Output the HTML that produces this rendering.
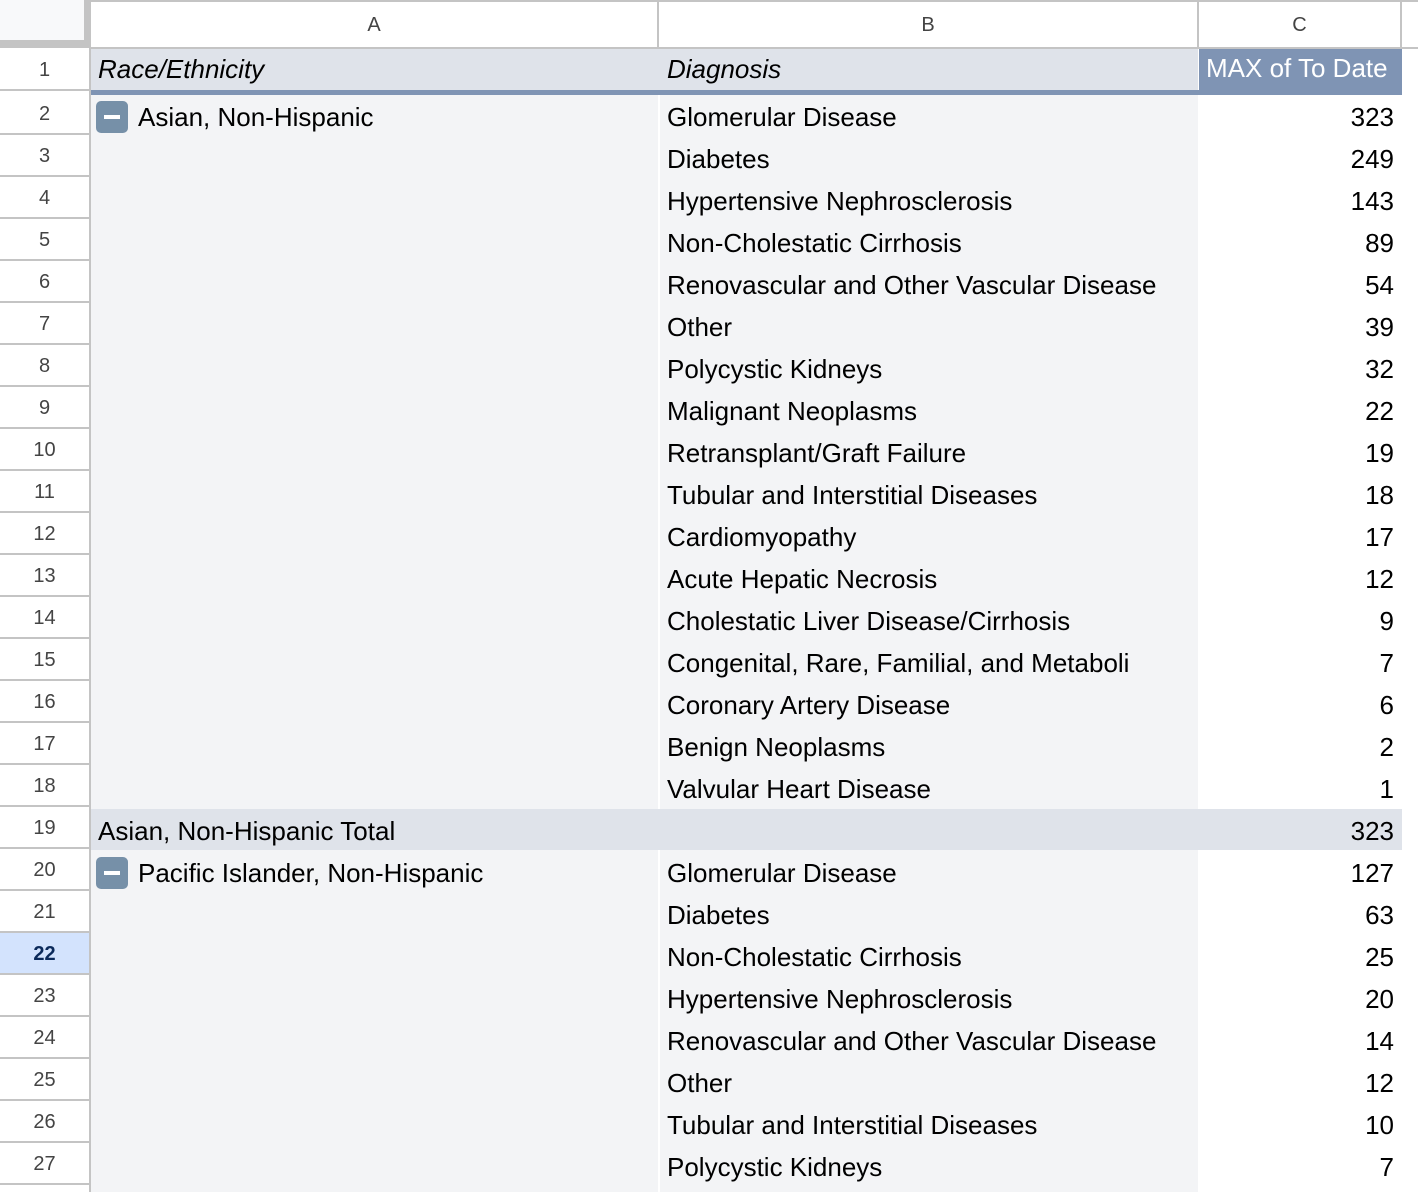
<!DOCTYPE html>
<html><head><meta charset="utf-8"><style>
*{margin:0;padding:0;box-sizing:border-box}
html,body{width:1418px;height:1192px;overflow:hidden}
body{background:#fff;font-family:"Liberation Sans",Arial,sans-serif;position:relative}
.a{position:absolute}
.rh{position:absolute;left:0;width:89px;height:42px;border-bottom:2px solid #c4c4c4;text-align:center;font-size:20px;color:#444;line-height:42px;background:#fff}
.t{position:absolute;font-size:26px;color:#000;line-height:46px;white-space:nowrap}
.n{position:absolute;right:24px;font-size:26px;line-height:46px;color:#000}
.mi{position:absolute;left:96px;width:32px;height:32px;background:#7690a8;border-radius:5px}
.mi:after{content:"";position:absolute;left:8px;top:14px;width:16px;height:4px;background:#fff}
</style></head><body>
<div class="a" style="left:0;top:0;width:84px;height:40px;background:#f8f9fa"></div>
<div class="a" style="left:0;top:40px;width:89px;height:8px;background:#c4c4c4"></div>
<div class="a" style="left:84px;top:0;width:7px;height:48px;background:#c4c4c4"></div>
<div class="a" style="left:91px;top:0;width:1327px;height:2px;background:#c4c4c4"></div>
<div class="a" style="left:91px;top:47px;width:1327px;height:2px;background:#c4c4c4"></div>
<div class="a" style="left:657px;top:0;width:2px;height:48px;background:#c4c4c4"></div>
<div class="a" style="left:1197px;top:0;width:2px;height:48px;background:#c4c4c4"></div>
<div class="a" style="left:1400px;top:0;width:2px;height:48px;background:#c4c4c4"></div>
<div class="a" style="left:91px;top:3px;width:566px;height:44px;text-align:center;font-size:20px;color:#444;line-height:44px">A</div>
<div class="a" style="left:659px;top:3px;width:538px;height:44px;text-align:center;font-size:20px;color:#444;line-height:44px">B</div>
<div class="a" style="left:1199px;top:3px;width:201px;height:44px;text-align:center;font-size:20px;color:#444;line-height:44px">C</div>
<div class="a" style="left:89px;top:48px;width:2px;height:1144px;background:#c4c4c4"></div>
<div class="a" style="left:91px;top:95px;width:567px;height:1097px;background:#f3f4f6"></div>
<div class="a" style="left:660px;top:95px;width:538px;height:1097px;background:#f3f4f6"></div>
<div class="a" style="left:91px;top:49px;width:1107px;height:41px;background:#dfe3ea"></div>
<div class="a" style="left:1199px;top:49px;width:203px;height:41px;background:#7f94b4"></div>
<div class="a" style="left:91px;top:90px;width:1311px;height:5px;background:#7f94b4"></div>
<div class="t" style="left:98px;top:46px;font-style:italic">Race/Ethnicity</div>
<div class="t" style="left:667px;top:46px;font-style:italic">Diagnosis</div>
<div class="t" style="left:1206px;top:45px;color:#fff">MAX of To Date</div>
<div class="a" style="left:91px;top:809px;width:1311px;height:41px;background:#dfe3ea"></div>
<div class="t" style="left:98px;top:808px">Asian, Non-Hispanic Total</div>
<div class="n" style="top:808px">323</div>
<div class="mi" style="top:101px"></div>
<div class="t" style="left:138px;top:94px">Asian, Non-Hispanic</div>
<div class="mi" style="top:857px"></div>
<div class="t" style="left:138px;top:850px">Pacific Islander, Non-Hispanic</div>
<div class="rh" style="top:49px">1</div>
<div class="rh" style="top:93px">2</div><div class="rh" style="top:135px">3</div><div class="rh" style="top:177px">4</div><div class="rh" style="top:219px">5</div><div class="rh" style="top:261px">6</div><div class="rh" style="top:303px">7</div><div class="rh" style="top:345px">8</div><div class="rh" style="top:387px">9</div><div class="rh" style="top:429px">10</div><div class="rh" style="top:471px">11</div><div class="rh" style="top:513px">12</div><div class="rh" style="top:555px">13</div><div class="rh" style="top:597px">14</div><div class="rh" style="top:639px">15</div><div class="rh" style="top:681px">16</div><div class="rh" style="top:723px">17</div><div class="rh" style="top:765px">18</div><div class="rh" style="top:807px">19</div><div class="rh" style="top:849px">20</div><div class="rh" style="top:891px">21</div><div class="rh" style="top:933px;background:#d3e3fd;color:#0b2a5a;font-weight:bold">22</div><div class="rh" style="top:975px">23</div><div class="rh" style="top:1017px">24</div><div class="rh" style="top:1059px">25</div><div class="rh" style="top:1101px">26</div><div class="rh" style="top:1143px">27</div>
<div class="t" style="left:667px;top:94px">Glomerular Disease</div><div class="n" style="top:94px">323</div>
<div class="t" style="left:667px;top:136px">Diabetes</div><div class="n" style="top:136px">249</div>
<div class="t" style="left:667px;top:178px">Hypertensive Nephrosclerosis</div><div class="n" style="top:178px">143</div>
<div class="t" style="left:667px;top:220px">Non-Cholestatic Cirrhosis</div><div class="n" style="top:220px">89</div>
<div class="t" style="left:667px;top:262px">Renovascular and Other Vascular Disease</div><div class="n" style="top:262px">54</div>
<div class="t" style="left:667px;top:304px">Other</div><div class="n" style="top:304px">39</div>
<div class="t" style="left:667px;top:346px">Polycystic Kidneys</div><div class="n" style="top:346px">32</div>
<div class="t" style="left:667px;top:388px">Malignant Neoplasms</div><div class="n" style="top:388px">22</div>
<div class="t" style="left:667px;top:430px">Retransplant/Graft Failure</div><div class="n" style="top:430px">19</div>
<div class="t" style="left:667px;top:472px">Tubular and Interstitial Diseases</div><div class="n" style="top:472px">18</div>
<div class="t" style="left:667px;top:514px">Cardiomyopathy</div><div class="n" style="top:514px">17</div>
<div class="t" style="left:667px;top:556px">Acute Hepatic Necrosis</div><div class="n" style="top:556px">12</div>
<div class="t" style="left:667px;top:598px">Cholestatic Liver Disease/Cirrhosis</div><div class="n" style="top:598px">9</div>
<div class="t" style="left:667px;top:640px">Congenital, Rare, Familial, and Metaboli</div><div class="n" style="top:640px">7</div>
<div class="t" style="left:667px;top:682px">Coronary Artery Disease</div><div class="n" style="top:682px">6</div>
<div class="t" style="left:667px;top:724px">Benign Neoplasms</div><div class="n" style="top:724px">2</div>
<div class="t" style="left:667px;top:766px">Valvular Heart Disease</div><div class="n" style="top:766px">1</div>
<div class="t" style="left:667px;top:850px">Glomerular Disease</div><div class="n" style="top:850px">127</div>
<div class="t" style="left:667px;top:892px">Diabetes</div><div class="n" style="top:892px">63</div>
<div class="t" style="left:667px;top:934px">Non-Cholestatic Cirrhosis</div><div class="n" style="top:934px">25</div>
<div class="t" style="left:667px;top:976px">Hypertensive Nephrosclerosis</div><div class="n" style="top:976px">20</div>
<div class="t" style="left:667px;top:1018px">Renovascular and Other Vascular Disease</div><div class="n" style="top:1018px">14</div>
<div class="t" style="left:667px;top:1060px">Other</div><div class="n" style="top:1060px">12</div>
<div class="t" style="left:667px;top:1102px">Tubular and Interstitial Diseases</div><div class="n" style="top:1102px">10</div>
<div class="t" style="left:667px;top:1144px">Polycystic Kidneys</div><div class="n" style="top:1144px">7</div>
</body></html>
